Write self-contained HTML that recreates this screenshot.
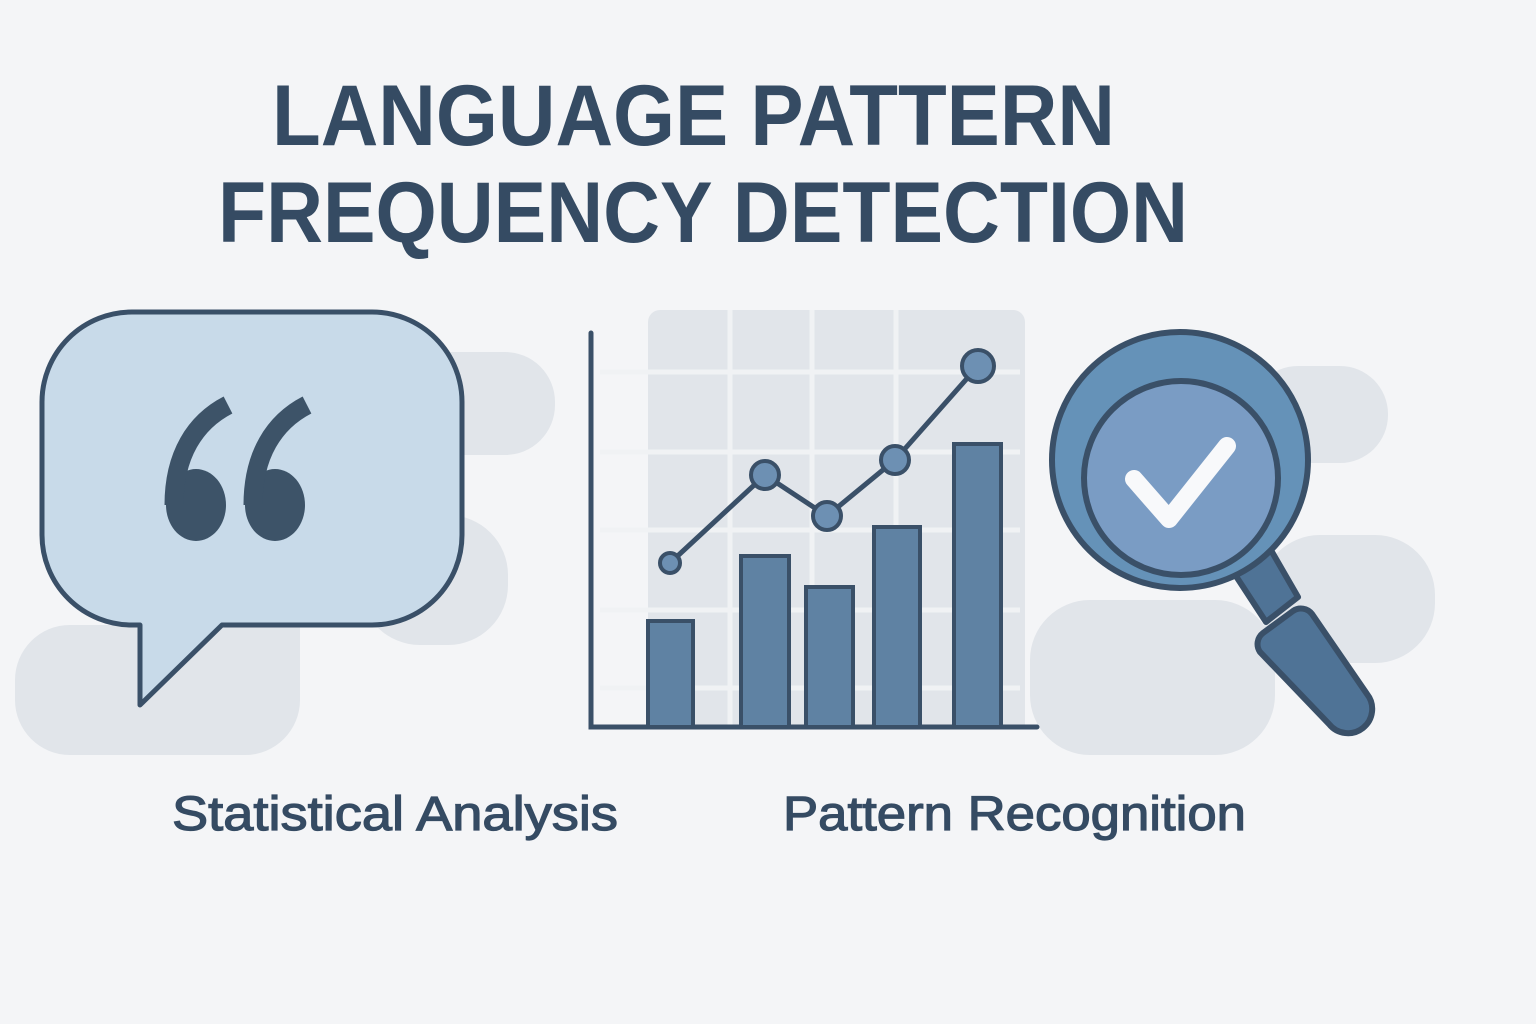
<!DOCTYPE html><html><head><style>html,body{margin:0;padding:0;background:#f4f5f7}</style></head><body>
<svg width="1536" height="1024" viewBox="0 0 1536 1024" xmlns="http://www.w3.org/2000/svg" style="display:block">
<rect width="1536" height="1024" fill="#f4f5f7"/>
<g fill="#e1e5ea">
<rect x="360" y="352" width="195" height="103" rx="50"/>
<rect x="360" y="515" width="148" height="130" rx="60"/>
<path d="M70 625 H300 V700 a55 55 0 0 1 -55 55 H70 a55 55 0 0 1 -55 -55 V680 a55 55 0 0 1 55 -55Z"/>
<rect x="1250" y="366" width="138" height="97" rx="48"/>
<rect x="1260" y="535" width="175" height="128" rx="60"/>
<rect x="1030" y="600" width="245" height="155" rx="60"/>
<rect x="648" y="310" width="377" height="300" rx="12"/>
<rect x="648" y="560" width="377" height="168" rx="0"/>
</g>
<g stroke="#f0f2f4" stroke-width="5">
<line x1="730" y1="310" x2="730" y2="727"/><line x1="812" y1="310" x2="812" y2="727"/><line x1="896" y1="310" x2="896" y2="727"/>
<line x1="600" y1="372" x2="1020" y2="372"/><line x1="600" y1="452" x2="1020" y2="452"/><line x1="600" y1="530" x2="1020" y2="530"/><line x1="600" y1="610" x2="1020" y2="610"/><line x1="600" y1="688" x2="1020" y2="688"/>
</g>
<path d="M132 312 H372 a90 90 0 0 1 90 90 V535 a90 90 0 0 1 -90 90 H222 L140 705 V625 H132 a90 90 0 0 1 -90 -90 V402 a90 90 0 0 1 90 -90Z" fill="#c8dae9" stroke="#3a5068" stroke-width="5" stroke-linejoin="round"/>
<g fill="#3d5368">
<ellipse cx="196" cy="505" rx="30" ry="36"/>
<ellipse cx="275" cy="505" rx="30" ry="36"/>
</g>
<g fill="none" stroke="#3d5368" stroke-width="19" stroke-linecap="butt">
<path d="M228 405 C195 422 174 455 174 505"/>
<path d="M307 405 C274 422 253 455 253 505"/>
</g>
<path d="M591 333 V727 H1037" fill="none" stroke="#3a5068" stroke-width="5" stroke-linecap="round"/>
<g fill="#5f82a3" stroke="#3a5068" stroke-width="4">
<rect x="648" y="621" width="45" height="106"/><rect x="741" y="556" width="48" height="171"/><rect x="806" y="587" width="47" height="140"/><rect x="874" y="527" width="46" height="200"/><rect x="954" y="444" width="47" height="283"/>
</g>
<polyline points="670,563 765,475 827,516 895,460 978,366" fill="none" stroke="#3a5068" stroke-width="5"/>
<g fill="#6d90b3" stroke="#3a5068" stroke-width="4">
<circle cx="670" cy="563" r="10"/><circle cx="765" cy="475" r="14"/><circle cx="827" cy="516" r="14"/><circle cx="895" cy="460" r="14"/><circle cx="978" cy="366" r="16"/>
</g>
<g stroke="#3a5068" stroke-width="6" stroke-linejoin="round">
<path d="M1232 570 L1268 545 L1298 597 L1266 622Z" fill="#4f7396"/>
<path d="M1260 652 a14 14 0 0 1 3 -19 l30 -22 a14 14 0 0 1 19 3 l55 80 a24 24 0 0 1 -38 30 z" fill="#4f7396"/>
<circle cx="1180" cy="460" r="128" fill="#6592b8"/>
<circle cx="1181" cy="478" r="97" fill="#7a9cc4"/>
</g>
<polyline points="1134,479 1169,519 1227,446" fill="none" stroke="#f8f9fb" stroke-width="18" stroke-linecap="round" stroke-linejoin="round"/>
<g font-family="Liberation Sans, sans-serif" font-weight="bold" fill="#354b63">
<text x="272" y="145" font-size="86" textLength="843" lengthAdjust="spacingAndGlyphs">LANGUAGE PATTERN</text>
<text x="218" y="242" font-size="86" textLength="970" lengthAdjust="spacingAndGlyphs">FREQUENCY DETECTION</text>
</g>
<g font-family="Liberation Sans, sans-serif" fill="#354b63" stroke="#354b63" stroke-width="1.2" font-size="48">
<text x="172" y="830" textLength="446" lengthAdjust="spacingAndGlyphs">Statistical Analysis</text>
<text x="783" y="830" textLength="463" lengthAdjust="spacingAndGlyphs">Pattern Recognition</text>
</g>
</svg>
</body></html>
